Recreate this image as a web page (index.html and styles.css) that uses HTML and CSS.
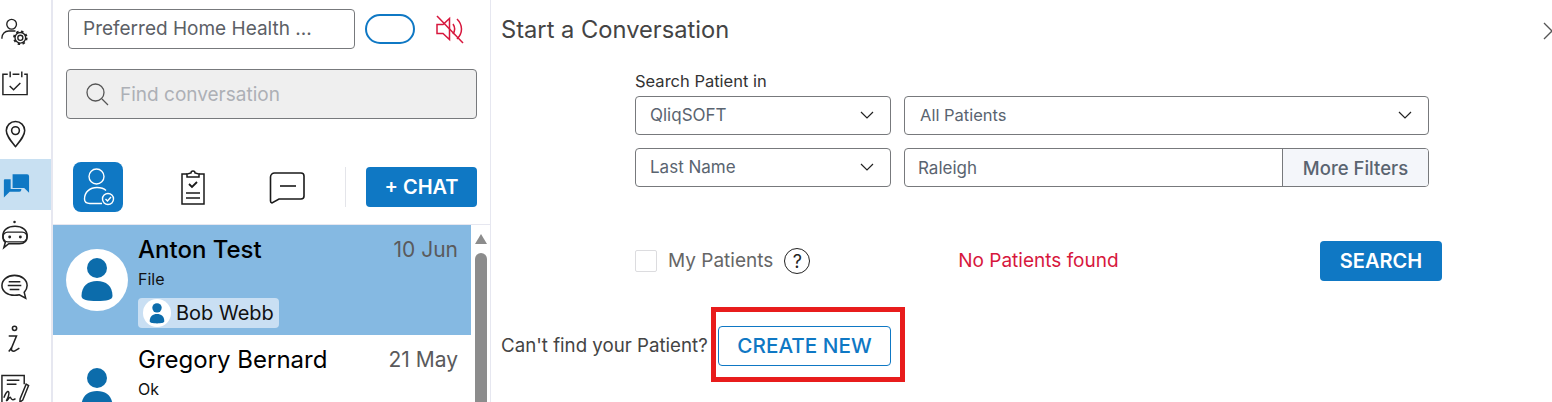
FILE: index.html
```html
<!DOCTYPE html>
<html lang="en">
<head>
<meta charset="UTF-8" />
<title>Start a Conversation</title>
<link rel="stylesheet" href="styles.css">
</head>
<body>
  <nav class="rail">
    <div class="rail-item">
      <svg width="32" height="32" viewBox="0 0 32 32" fill="none" stroke="#222" stroke-width="1.400"><circle cx="12" cy="8" r="5"/><path d="M2 23v-1c0-4 3-7 7-7h7"/><circle cx="21" cy="22" r="2.600"/><circle cx="21" cy="22" r="5.500"/><circle cx="21" cy="22" r="6.500" stroke-width="2" stroke-dasharray="2.500 2.600"/></svg>
    </div>
    <div class="rail-item">
      <svg width="32" height="32" viewBox="0 0 32 32" fill="none" stroke="#222" stroke-width="1.500"><path d="M8 7H3v21h25V7h-3M13 7h7M10.500 4v6M22.500 4v6"/><path d="M10 19l4 4 7-7"/></svg>
    </div>
    <div class="rail-item">
      <svg width="32" height="32" viewBox="0 0 32 32" fill="none" stroke="#222" stroke-width="1.600"><path d="M16 29C11 23 6.500 18 6.500 12.500a9.500 9.500 0 0 1 19 0C25.500 18 21 23 16 29z"/><circle cx="16" cy="12.500" r="4"/></svg>
    </div>
    <div class="rail-item active">
      <svg width="32" height="32" viewBox="0 0 32 32" fill="#0f78c4"><path d="M13 5h15a2 2 0 0 1 2 2v17l-5-5H13z"/><path d="M5 10h6v10h11v1a2 2 0 0 1-2 2H10l-6 6V11a1 1 0 0 1 1-1z"/></svg>
    </div>
    <div class="rail-item">
      <svg width="32" height="34" viewBox="0 0 32 34" fill="none" stroke="#222" stroke-width="1.600"><circle cx="15" cy="2.500" r="1.300" fill="#222" stroke="none"/><path d="M3 17c0-6 5-10 12.500-10S28 11 28 17c0 5-3 8-8 8H9l-5 4 1.500-5.500C3.500 22 3 20 3 17z"/><rect x="3" y="13" width="25" height="10" rx="5" stroke-width="1.400"/><circle cx="10" cy="18" r="1.500" fill="#222" stroke="none"/><circle cx="21" cy="18" r="1.500" fill="#222" stroke="none"/></svg>
    </div>
    <div class="rail-item">
      <svg width="32" height="32" viewBox="0 0 32 32" fill="none" stroke="#222" stroke-width="1.600"><path d="M15 4c7.500 0 13 4.500 13 10.500 0 3-1 5-3 7l1.500 6-6.500-3.500c-1.500.4-3.300.5-5 .5C7.500 24.500 2 20.500 2 14.500S7.500 4 15 4z"/><path d="M9 10.500h12M8 14.500h14M10 18.500h10"/></svg>
    </div>
    <div class="rail-item">
      <svg width="32" height="34" viewBox="0 0 32 34" fill="none" stroke="#222" stroke-width="1.600"><circle cx="15" cy="7" r="2.200"/><path d="M9 15h8l-5 12c-1 3 1 4 3 3.500l5-3"/><path d="M9 31c1-1 2-2 3-4"/></svg>
    </div>
    <div class="rail-item">
      <svg width="32" height="34" viewBox="0 0 32 34" fill="none" stroke="#222" stroke-width="1.500"><path d="M25 12V3H2v29h22"/><path d="M7 8h13M7 12h10"/><path d="M4 26c3-8 6-8 5-3s-3 6-2 6 3-5 4-3 2 3 5 1"/><path d="M27 12l2.500 1.500-6 15-3 2 .3-3.500z"/></svg>
    </div>
  </nav>

  <aside class="panel">
    <div class="top-row">
      <div class="org-select">Preferred Home Health ...</div>
      <div class="toggle"></div>
      <svg class="mute" width="30" height="30" viewBox="0 0 30 30" fill="none" stroke="#d7173d" stroke-width="1.500"><path d="M2 10.500v9h6l6.500 6V4.500L8 10.500z"/><path d="M18 10c2 3 2 7 0 10M22 5c6 6 6 14 0 20"/><path d="M2 2l26 27"/></svg>
    </div>
    <div class="find">
      <svg width="26" height="26" viewBox="0 0 26 26" fill="none" stroke="#555" stroke-width="1.300"><circle cx="11.500" cy="11.500" r="8.500"/><path d="M18 18l6 6"/></svg>
      <span>Find conversation</span>
    </div>
    <div class="tabs">
      <div class="tab tab-on">
        <svg width="36" height="40" viewBox="0 0 36 40" fill="none" stroke="#fff" stroke-width="1.400"><circle cx="16.500" cy="9.500" r="7.500"/><path d="M22 36.500H10c-3.500 0-5.500-2-5.500-4.500C4.500 25 10 20.500 17 20.500c4 0 7 1 9 3"/><circle cx="28" cy="32" r="5.500"/><path d="M25.500 32l2 2 3.500-4"/></svg>
      </div>
      <div class="tab tab-clip">
        <svg width="28" height="36" viewBox="0 0 28 36" fill="none" stroke="#1a1a1a" stroke-width="1.500"><path d="M8 5H3v30h22V5h-5"/><path d="M8 8V5l4-1a2 2 0 0 1 4 0l4 1v3z"/><path d="M10 15l3 3 5-5" stroke-width="1.800"/><path d="M7 24h14M7 29h14"/></svg>
      </div>
      <div class="tab tab-msg">
        <svg width="38" height="34" viewBox="0 0 38 34" fill="none" stroke="#1a1a1a" stroke-width="1.600"><path d="M7 3h26a3 3 0 0 1 3 3v20a3 3 0 0 1-3 3H11l-7 4a2 2 0 0 1-1.500-2V7a4 4 0 0 1 4.500-4z"/><path d="M12 16h16"/></svg>
      </div>
      <div class="divider"></div>
      <button class="btn-chat">+ CHAT</button>
    </div>
    <div class="list-wrap">
      <div class="list">
        <div class="conv conv-on">
          <div class="avatar">
            <svg width="34" height="44" viewBox="0 0 34 44" fill="#0c6cab"><circle cx="17" cy="10" r="10"/><path d="M1.500 38C1.500 28 8 23 17 23s15.500 5 15.500 15c0 4-6 5-15.500 5S1.500 42 1.500 38z"/></svg>
          </div>
          <div class="conv-body">
            <div class="conv-head"><span class="conv-name">Anton Test</span><span class="conv-date">10 Jun</span></div>
            <div class="conv-msg">File</div>
            <div class="chip">
              <span class="chip-avatar"><svg width="16" height="21" viewBox="0 0 34 44" fill="#0c6cab"><circle cx="17" cy="10" r="10"/><path d="M1.500 38C1.500 28 8 23 17 23s15.500 5 15.500 15c0 4-6 5-15.500 5S1.500 42 1.500 38z"/></svg></span>
              Bob Webb
            </div>
          </div>
        </div>
        <div class="conv">
          <div class="avatar">
            <svg width="34" height="44" viewBox="0 0 34 44" fill="#0c6cab"><circle cx="17" cy="10" r="10"/><path d="M1.500 38C1.500 28 8 23 17 23s15.500 5 15.500 15c0 4-6 5-15.500 5S1.500 42 1.500 38z"/></svg>
          </div>
          <div class="conv-body">
            <div class="conv-head"><span class="conv-name normal">Gregory Bernard</span><span class="conv-date">21 May</span></div>
            <div class="conv-msg">Ok</div>
          </div>
        </div>
      </div>
      <div class="scrollbar">
        <div class="scroll-up"></div>
        <div class="scroll-thumb"></div>
      </div>
    </div>
  </aside>

  <main class="main">
    <div class="main-head">
      <h1>Start a Conversation</h1>
      <svg class="close" width="18" height="18" viewBox="0 0 18 18" fill="none" stroke="#555" stroke-width="1.300"><path d="M1 1l16 16M17 1L1 17"/></svg>
    </div>
    <div class="form">
      <label class="form-label">Search Patient in</label>
      <div class="form-row">
        <div class="field field-left">QliqSOFT<svg class="chev" width="14" height="8" viewBox="0 0 14 8" fill="none" stroke="#222" stroke-width="1.200"><path d="M1 1l6 6 6-6"/></svg></div>
        <div class="field field-right">All Patients<svg class="chev" width="14" height="8" viewBox="0 0 14 8" fill="none" stroke="#222" stroke-width="1.200"><path d="M1 1l6 6 6-6"/></svg></div>
      </div>
      <div class="form-row">
        <div class="field field-left">Last Name<svg class="chev" width="14" height="8" viewBox="0 0 14 8" fill="none" stroke="#222" stroke-width="1.200"><path d="M1 1l6 6 6-6"/></svg></div>
        <div class="field field-right field-group">
          <span class="field-text">Raleigh</span>
          <span class="more">More Filters</span>
        </div>
      </div>
      <div class="check-row">
        <span class="checkbox"></span>
        <span class="check-label">My Patients</span>
        <span class="help">?</span>
        <span class="no-result">No Patients found</span>
        <button class="btn-search">SEARCH</button>
      </div>
    </div>
    <div class="create-row">
      <span class="create-text">Can't find your Patient?</span>
      <div class="highlight"><button class="btn-create">CREATE NEW</button></div>
    </div>
  </main>
</body>
</html>
```

FILE: styles.css
```css
:root {
  --blue: #0f78c4;
  --line: #77797c;
  --edge: #e6e7f0;
  --text: #5c6066;
  --font-family: Inter, "Liberation Sans", sans-serif;
}
* {
  box-sizing: border-box;
}
html, body {
  margin: 0;
  height: 402px;
  overflow: hidden;
  background: #fff;
  font-family: var(--font-family);
}
body {
  display: flex;
}
button {
  font-family: inherit;
  cursor: pointer;
}

/* left icon rail */
.rail {
  width: 53px;
  height: 402px;
  flex: none;
  padding-top: 6px;
  border-right: 2px solid var(--edge);
  overflow: hidden;
}
.rail-item {
  height: 51px;
  display: flex;
  align-items: center;
  justify-content: center;
  padding-right: 20px;
}
.rail-item.active {
  background: #c8e0f2;
}

/* conversation panel */
.panel {
  width: 438px;
  height: 402px;
  flex: none;
  border-right: 1px solid var(--edge);
  display: flex;
  flex-direction: column;
}
.top-row {
  display: flex;
  align-items: center;
  height: 40px;
  margin: 9px 0 0 15px;
}
.org-select {
  width: 287px;
  height: 40px;
  border: 1px solid var(--line);
  border-radius: 4px;
  padding-left: 14px;
  font-size: 19px;
  line-height: 37px;
  color: var(--text);
  white-space: nowrap;
}
.toggle {
  width: 50px;
  height: 30px;
  margin-left: 10px;
  border: 2px solid var(--blue);
  border-radius: 15px;
}
.mute {
  margin-left: 20px;
}
.find {
  height: 50px;
  margin: 20px 13px 0 13px;
  background: #efefef;
  border: 1px solid var(--line);
  border-radius: 4px;
  display: flex;
  align-items: center;
  gap: 10px;
  padding-left: 17px;
  font-size: 19px;
  color: #adb0b6;
}
.tabs {
  display: flex;
  align-items: center;
  height: 50px;
  margin: 43px 13px 0 20px;
}
.tab {
  display: flex;
  align-items: center;
  justify-content: center;
}
.tab-on {
  width: 50px;
  height: 50px;
  background: var(--blue);
  border-radius: 8px;
}
.tab-clip {
  width: 28px;
  margin-left: 56px;
}
.tab-msg {
  width: 38px;
  margin-left: 61px;
}
.divider {
  width: 1px;
  height: 40px;
  background: #e4e5ea;
  margin-left: 39px;
}
.btn-chat {
  margin-left: 20px;
  width: 111px;
  height: 40px;
  border: 0;
  border-radius: 4px;
  background: var(--blue);
  color: #fff;
  font-size: 20px;
  font-weight: 600;
}

/* conversation list */
.list-wrap {
  flex: 1;
  margin-top: 12px;
  border-top: 1px solid var(--edge);
  display: flex;
  min-height: 0;
  overflow: hidden;
}
.list {
  width: 418px;
}
.conv {
  height: 110px;
  display: flex;
  padding: 9px 13px 0 13px;
}
.conv-on {
  background: #85b9e2;
}
.avatar {
  width: 62px;
  height: 62px;
  margin-top: 15px;
  flex: none;
  border-radius: 50%;
  background: #fff;
  display: flex;
  align-items: flex-end;
  justify-content: center;
  padding-bottom: 9px;
}
.conv-body {
  flex: 1;
  margin-left: 10px;
}
.conv-head {
  display: flex;
  justify-content: space-between;
  align-items: center;
  height: 30px;
}
.conv-name {
  font-size: 24px;
  font-weight: 500;
  color: #000;
}
.conv-name.normal {
  font-weight: 400;
}
.conv-date {
  font-size: 21px;
  color: #5a5a5c;
}
.conv-msg {
  margin-top: 5px;
  font-size: 16px;
  line-height: 20px;
  color: #111;
}
.chip {
  display: inline-flex;
  align-items: center;
  gap: 5px;
  height: 30px;
  width: 141px;
  margin-top: 9px;
  padding-left: 5px;
  background: #c9dff3;
  border-radius: 4px;
  font-size: 20px;
  color: #111;
}
.chip-avatar {
  width: 28px;
  height: 28px;
  border-radius: 50%;
  background: #fff;
  display: flex;
  align-items: center;
  justify-content: center;
}
.scrollbar {
  width: 16px;
  padding-left: 4px;
}
.scroll-up {
  width: 0;
  margin: 9px 0 0 0;
  border-left: 6px solid transparent;
  border-right: 6px solid transparent;
  border-bottom: 10px solid #8c8c8c;
}
.scroll-thumb {
  width: 12px;
  height: 160px;
  margin-top: 9px;
  background: #8c8c8c;
  border-radius: 6px;
}

/* start a conversation */
.main {
  flex: 1;
  min-width: 0;
  height: 402px;
  overflow: hidden;
  padding-left: 10px;
}
.main-head {
  display: flex;
  justify-content: space-between;
  align-items: center;
  height: 30px;
  margin-top: 14px;
}
.main-head h1 {
  margin: 0;
  font-size: 23.700px;
  font-weight: 400;
  color: #444;
}
.close {
  margin: 4px -9px 0 0;
}
.form {
  margin: 27px 0 0 134px;
  width: 807px;
}
.form-label {
  display: block;
  font-size: 16.500px;
  line-height: 20px;
  color: #333;
}
.form-row {
  display: flex;
  gap: 13px;
  margin-top: 13px;
}
.form-label + .form-row {
  margin-top: 5px;
}
.field {
  height: 39px;
  border: 1px solid var(--line);
  border-radius: 4px;
  display: flex;
  align-items: center;
  justify-content: space-between;
  font-size: 17px;
  color: #5a6470;
}
.field-left {
  width: 256px;
  padding: 0 16px 2px 14px;
}
.field-right {
  width: 525px;
  padding: 0 16px 2px 15px;
  font-size: 16.500px;
}
.field-group {
  padding: 0;
  overflow: hidden;
  font-size: 17px;
}
.field-text {
  padding-left: 13px;
}
.more {
  width: 146px;
  height: 100%;
  padding-top: 1px;
  background: #f4f6fa;
  border-left: 1px solid var(--line);
  display: flex;
  align-items: center;
  justify-content: center;
  font-size: 18.500px;
  font-weight: 500;
}
.check-row {
  display: flex;
  align-items: center;
  height: 40px;
  margin-top: 54px;
  width: 807px;
}
.checkbox {
  width: 22px;
  height: 22px;
  border: 1px solid #dcdcdf;
  border-radius: 2px;
}
.check-label {
  margin-left: 11px;
  padding-bottom: 2px;
  font-size: 19px;
  color: #666;
}
.help {
  width: 26px;
  height: 26px;
  margin-left: 11px;
  border: 1.500px solid #222;
  border-radius: 50%;
  display: flex;
  align-items: center;
  justify-content: center;
  font-size: 18px;
  color: #222;
}
.no-result {
  margin-left: 148px;
  padding-bottom: 2px;
  font-size: 19px;
  color: #d7173d;
}
.btn-search {
  margin-left: auto;
  width: 122px;
  height: 40px;
  border: 0;
  border-radius: 4px;
  background: var(--blue);
  color: #fff;
  font-size: 20px;
  font-weight: 600;
}
.create-row {
  display: flex;
  align-items: center;
  margin-top: 26px;
}
.create-text {
  width: 210px;
  padding-top: 2px;
  font-size: 18.700px;
  color: #444;
  white-space: nowrap;
}
.highlight {
  width: 194px;
  height: 75px;
  border: 5px solid #e81c1c;
  padding: 14px 0 0 2px;
}
.btn-create {
  display: block;
  width: 173px;
  height: 40px;
  padding-bottom: 3px;
  border: 1px solid var(--blue);
  border-radius: 4px;
  background: #fff;
  color: var(--blue);
  font-size: 20.700px;
  font-weight: 500;
}
```
